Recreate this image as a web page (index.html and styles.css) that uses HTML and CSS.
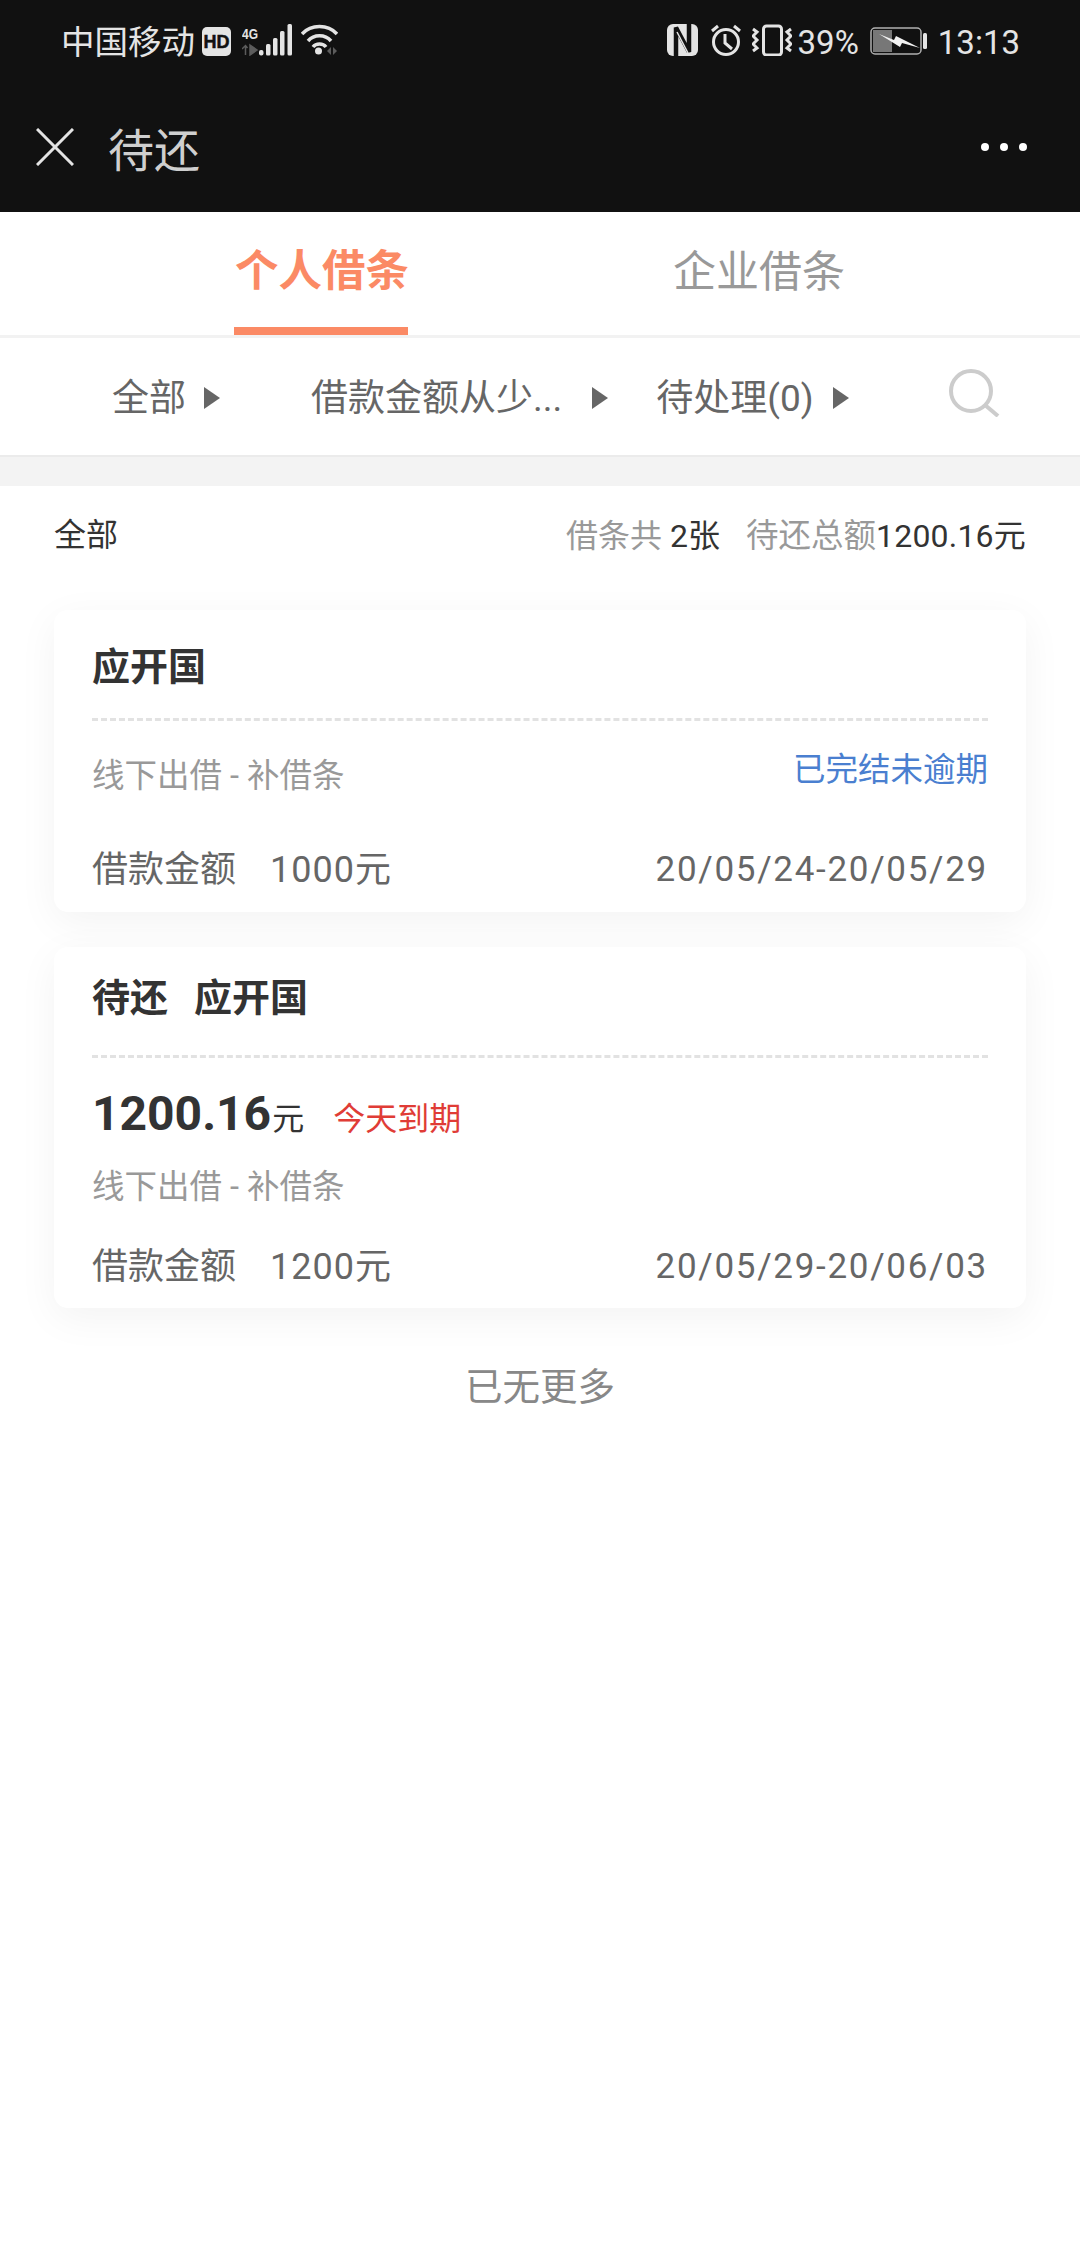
FILE: index.html
```html
<!DOCTYPE html>
<html lang="zh-CN">
<head>
    <meta charset="UTF-8">
    <meta name="viewport" content="width=device-width, initial-scale=1.0">
    <title>待还</title>
    <link rel="stylesheet" href="styles.css">
</head>
<body>
    <div class="top-bar">
        <div class="status-bar">
            <div class="status-left">
                <span class="carrier">中国移动</span>
                <svg class="icon-hd" width="29" height="29" viewBox="0 0 29 29">
                    <rect width="29" height="29" rx="5" fill="#e4e4e4"/>
                    <text x="14.500" y="21" text-anchor="middle" class="hd-text">HD</text>
                </svg>
                <svg class="icon-signal" width="50" height="32" viewBox="0 0 50 32">
                    <text x="0" y="15" class="net-text" textLength="16" lengthAdjust="spacingAndGlyphs">4G</text>
                    <path d="M3.500 31V22M0 25l3.500-3.500L5.500 24M8 21l7 5-7 5z" stroke="#5c5c5c" stroke-width="1.500" fill="none"/>
                    <path d="M8 21l7 5-7 5z" fill="#5c5c5c"/>
                    <rect x="17" y="26" width="4.500" height="5.500" rx="2" fill="#e4e4e4"/>
                    <rect x="24" y="20" width="4.500" height="11.500" rx="1.500" fill="#e4e4e4"/>
                    <rect x="31" y="14" width="4.500" height="17.500" rx="1.500" fill="#e4e4e4"/>
                    <rect x="38" y="7" width="4.500" height="24.500" rx="1.500" fill="#e4e4e4"/>
                    <rect x="45.500" y="0" width="4.500" height="31.500" rx="1.500" fill="#e4e4e4"/>
                </svg>
                <svg class="icon-wifi" width="37" height="32" viewBox="0 0 37 32">
                    <path d="M1 10C10 0 27 0 36 10M7 17C13 10 24 10 30 17M12 23C15 19 22 19 25 23" fill="none" stroke="#e4e4e4" stroke-width="3.500"/>
                    <circle cx="17.500" cy="27" r="3.500" fill="#e4e4e4"/>
                    <path d="M30 23v8l-4-4zM32 23v8l4-4z" fill="#5c5c5c"/>
                </svg>
            </div>
            <div class="status-right">
                <svg class="icon-nfc" width="31" height="32" viewBox="0 0 31 32">
                    <rect width="31" height="32" rx="6" fill="#e4e4e4"/>
                    <path d="M9 32V3.500L22 28V0" fill="none" stroke="#111" stroke-width="4.500"/>
                    <path d="M10 8l11 21" fill="none" stroke="#e4e4e4" stroke-width="1.500"/>
                </svg>
                <svg class="icon-alarm" width="30" height="32" viewBox="0 0 30 32">
                    <circle cx="15" cy="18" r="12.500" fill="none" stroke="#e4e4e4" stroke-width="3"/>
                    <path d="M14 10v9l7 6M1 7l6-5M29 7l-6-5" fill="none" stroke="#e4e4e4" stroke-width="3"/>
                </svg>
                <svg class="icon-vibrate" width="40" height="32" viewBox="0 0 40 32">
                    <rect x="11.500" y="2" width="18" height="29" rx="3" fill="none" stroke="#e4e4e4" stroke-width="3"/>
                    <path d="M1 5l4 3-4 4 4 4-4 4 4 4-4 3M39 5l-4 3 4 4-4 4 4 4-4 4 4 3" fill="none" stroke="#e4e4e4" stroke-width="3"/>
                </svg>
                <span class="status-text percent">39%</span>
                <svg class="icon-battery" width="58" height="28" viewBox="0 0 58 28">
                    <rect x="1" y="1" width="50" height="26" rx="4" fill="none" stroke="#b0b0b0" stroke-width="1.500"/>
                    <rect x="3" y="3" width="19" height="22" fill="#777"/>
                    <path d="M9 7l15 6 2-4 24 12-18-5-2 4z" fill="#f2f2f2"/>
                    <rect x="53" y="6" width="4" height="16" rx="1.500" fill="#e4e4e4"/>
                </svg>
                <span class="status-text clock">13:13</span>
            </div>
        </div>
        <div class="nav-bar">
            <svg class="icon-close" width="38" height="38" viewBox="0 0 38 38">
                <path d="M1 1l36 36M37 1L1 37" stroke="#e4e4e4" stroke-width="3"/>
            </svg>
            <span class="nav-title">待还</span>
            <div class="more-dots"><i></i><i></i><i></i></div>
        </div>
    </div>

    <div class="tabs">
        <div class="tab active">个人借条</div>
        <div class="tab">企业借条</div>
    </div>

    <div class="filters">
        <div class="filter filter-all">全部<span class="arrow"></span></div>
        <div class="filter filter-sort">借款金额从少...<span class="arrow"></span></div>
        <div class="filter filter-state">待处理(0)<span class="arrow"></span></div>
        <svg class="icon-search" width="52" height="48" viewBox="0 0 52 48">
            <circle cx="23" cy="22" r="20" fill="none" stroke="#ccc" stroke-width="4"/>
            <path d="M37 36l13 11" stroke="#ccc" stroke-width="4"/>
        </svg>
    </div>

    <div class="band"></div>

    <div class="summary">
        <span class="summary-left">全部</span>
        <span class="summary-right">借条共 <b>2张</b><em>待还总额</em><b class="summary-total">1200.16元</b></span>
    </div>

    <div class="card-list">
        <div class="card card-first">
            <div class="card-title">应开国</div>
            <div class="card-main">
                <div class="sub-row">
                    <span class="card-sub">线下出借 - 补借条</span>
                    <span class="card-status">已完结未逾期</span>
                </div>
            </div>
            <div class="card-bottom">
                <span>借款金额<em>1000元</em></span>
                <span class="card-date">20/05/24-20/05/29</span>
            </div>
        </div>

        <div class="card card-second">
            <div class="card-title">待还<em>应开国</em></div>
            <div class="card-main">
                <div class="amount-row">
                    <span class="amount">1200.16</span><span class="unit">元</span><span class="due">今天到期</span>
                </div>
                <div class="card-sub">线下出借 - 补借条</div>
            </div>
            <div class="card-bottom">
                <span>借款金额<em>1200元</em></span>
                <span class="card-date">20/05/29-20/06/03</span>
            </div>
        </div>
    </div>

    <div class="no-more">已无更多</div>
</body>
</html>
```

FILE: styles.css
```css
* {
    box-sizing: border-box;
}
body {
    margin: 0;
    background-color: #fff;
    font-family: Roboto, "Noto Sans CJK SC", sans-serif;
    color: #333;
}
em {
    font-style: normal;
}
.top-bar {
    height: 212px;
    background-color: #111;
    color: #e4e4e4;
}
.status-bar {
    height: 84px;
    padding: 24px 60px 0 61px;
    display: flex;
    justify-content: space-between;
    align-items: flex-start;
}
.status-left, .status-right {
    display: flex;
    align-items: flex-start;
}
.carrier {
    font-size: 33.500px;
    line-height: 34px;
    margin-top: 2px;
}
.icon-hd {
    margin-left: 7px;
    margin-top: 3px;
}
.hd-text {
    font-family: "Liberation Sans", sans-serif;
    font-size: 18px;
    font-weight: 700;
    fill: #111;
    stroke: #111;
    stroke-width: 0.5px;
}
.icon-signal {
    margin-left: 11px;
}
.net-text {
    font-family: "Liberation Sans", sans-serif;
    font-size: 15px;
    font-weight: 700;
    fill: #e4e4e4;
}
.icon-wifi {
    margin-left: 9px;
}
.icon-alarm {
    margin-left: 13px;
}
.icon-vibrate {
    margin-left: 11px;
}
.status-text {
    font-size: 33px;
    line-height: 34px;
    margin-top: 2px;
}
.percent {
    margin-left: 6px;
}
.icon-battery {
    margin-left: 11px;
    margin-top: 3px;
}
.clock {
    margin-left: 10px;
}
.nav-bar {
    height: 128px;
    padding: 0 53px 2px 36px;
    display: flex;
    align-items: center;
}
.nav-title {
    margin-left: 34px;
    font-size: 46px;
    color: #cfcfcf;
    flex: 1;
}
.more-dots {
    display: flex;
    gap: 11px;
}
.more-dots i {
    width: 8px;
    height: 8px;
    border-radius: 50%;
    background-color: #fff;
}
.tabs {
    height: 126px;
    display: grid;
    grid-template-columns: 174px 174px;
    column-gap: 265px;
    padding-left: 234px;
    border-bottom: 3px solid #f2f2f2;
}
.tab {
    height: 123px;
    padding-top: 30px;
    font-size: 43px;
    line-height: 60px;
    color: #999;
    white-space: nowrap;
}
.tab.active {
    color: #fb8a65;
    font-size: 43.500px;
    font-weight: 700;
    padding-left: 1px;
    border-bottom: 8px solid #fb8a65;
}
.filters {
    height: 119px;
    display: flex;
    align-items: center;
    border-bottom: 2px solid #ebebeb;
    font-size: 37px;
    color: #666;
    padding: 0 0 4px 112px;
}
.filter {
    display: flex;
    align-items: center;
    white-space: nowrap;
}
.filter-sort {
    margin-left: 91px;
}
.filter-state {
    margin-left: 48px;
}
.arrow {
    width: 0;
    height: 0;
    margin: 6px 0 0 18px;
    border-left: 16px solid #666;
    border-top: 11px solid transparent;
    border-bottom: 11px solid transparent;
}
.filter-sort .arrow {
    margin-left: 30px;
}
.filter-state .arrow {
    margin-left: 19px;
}
.icon-search {
    margin-left: 99px;
    margin-bottom: 3px;
}
.band {
    height: 29px;
    background-color: #f3f3f3;
}
.summary {
    height: 92px;
    padding: 0 54px;
    display: flex;
    justify-content: space-between;
    align-items: center;
    font-size: 32px;
    color: #333;
}
.summary-right {
    color: #999;
}
.summary-right b {
    font-weight: 400;
    color: #333;
}
.summary-right em {
    margin-left: 26px;
    font-size: 32.500px;
}
.summary-right .summary-total {
    letter-spacing: 0.2px;
}
.card-list {
    padding: 32px 54px 0;
    display: flex;
    flex-direction: column;
    gap: 35px;
}
.card {
    background-color: #fff;
    border-radius: 14px;
    padding: 0 38px;
    box-shadow: 0 10px 40px rgba(0,0,0,0.05);
}
.card-first {
    height: 302px;
}
.card-second {
    height: 361px;
}
.card-title {
    font-size: 38px;
    font-weight: 700;
    line-height: 54px;
    border-bottom: 3px dashed #e2e2e2;
}
.card-title em {
    margin-left: 26px;
}
.card-first .card-title {
    padding-top: 30px;
    height: 111px;
}
.card-second .card-title {
    padding-top: 24px;
    height: 111px;
}
.card-sub {
    font-size: 32.500px;
    color: #999;
    line-height: 44px;
}
.card-main {
    display: flex;
    flex-direction: column;
}
.card-first .card-main {
    height: 124px;
}
.sub-row {
    display: flex;
    justify-content: space-between;
    padding-top: 33px;
}
.card-status {
    font-size: 32.500px;
    color: #4a7fd0;
    line-height: 44px;
    margin-top: -6px;
}
.card-second .card-main {
    height: 184px;
}
.amount-row {
    display: flex;
    align-items: baseline;
    height: 97px;
    padding-top: 24px;
}
.amount {
    font-size: 48px;
    font-weight: 700;
    line-height: 64px;
}
.unit {
    font-size: 32px;
    margin-left: 1px;
}
.due {
    font-size: 32px;
    color: #e03c36;
    margin-left: 29px;
}
.card-second .card-sub {
    margin-top: 10px;
}
.card-bottom {
    display: flex;
    justify-content: space-between;
    align-items: center;
    font-size: 36px;
    color: #666;
    line-height: 50px;
}
.card-bottom em {
    margin-left: 34px;
    letter-spacing: 1px;
}
.card-date {
    font-size: 35px;
    letter-spacing: 1.700px;
}
.no-more {
    margin-top: 54px;
    text-align: center;
    font-size: 37.500px;
    line-height: 50px;
    color: #888;
}
```
